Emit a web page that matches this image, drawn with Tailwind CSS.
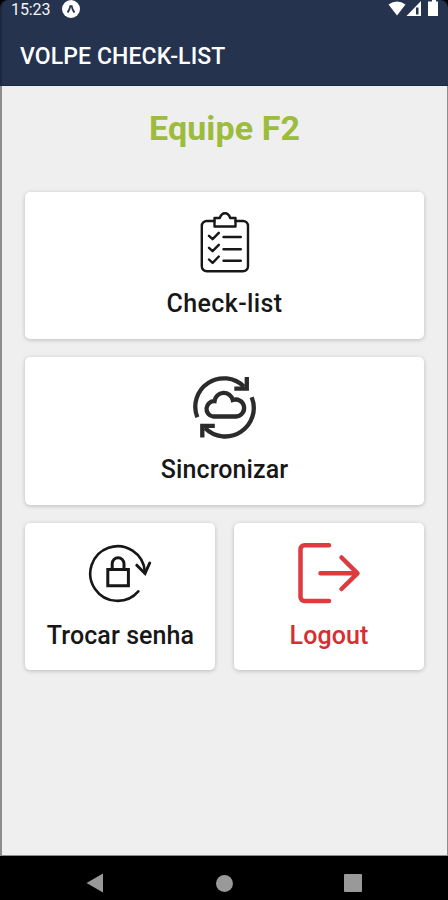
<!DOCTYPE html>
<html lang="pt-BR">
<head>
  <meta charset="UTF-8" />
  <meta name="viewport" content="width=device-width, initial-scale=1.0" />
  <title>Volpe Check-list</title>
  <script src="https://cdn.jsdelivr.net/npm/@tailwindcss/browser@4"></script>
</head>
<body class="bg-black font-['Roboto',sans-serif]">
  <div class="h-[900px] w-[448px] flex flex-col overflow-hidden">
    <!-- Header -->
    <header class="h-[86px] shrink-0 bg-[#25334f] border-l-2 border-[#1c2840] border-b border-b-[#1c2840] rounded-t-lg text-white">
      <div class="h-[18px] flex items-center justify-between pl-[9px] pr-[8px]">
        <div class="flex items-center gap-[12px]">
          <span class="pt-px text-[16px] leading-[19px] tracking-[-0.1px] text-gray-100">15:23</span>
          <svg class="w-[18px] h-[18px]" viewBox="0 0 18 18" fill="none">
            <circle cx="9" cy="9" r="9" fill="#fff" />
            <path d="M5.5 12.5C7 11 8 8 8.3 6.2h1.4C10 8 11 11 12.5 12.5" stroke="#25334f" stroke-width="1.8" />
          </svg>
        </div>
        <svg class="w-[52px] h-[18px]" viewBox="0 0 52 18" fill="#fff">
          <path d="M0.500 4.500Q9 -1.500 17.500 4.500L9 15.500z" />
          <path d="M33 1v15H18.500z" />
          <path d="M28 7.500h2.500v7H28z" fill="#25334f" />
          <path d="M42 1.500h2V0h4v1.500h2V16h-10V1.500z" />
        </svg>
      </div>
      <h1 class="mt-[25px] pl-[18px] text-[23px] leading-[28px] tracking-[0.1px] font-medium whitespace-nowrap">VOLPE CHECK-LIST</h1>
    </header>

    <!-- Content -->
    <main class="h-[770px] shrink-0 bg-[#efefef] border-l-2 border-r border-[#8c8c8c] border-b pt-[22px] pl-[23px] pr-[23px]">
      <h2 class="h-[83.500px] text-center text-[34px] leading-[40px] tracking-[0.1px] font-bold text-[#9dbb3c]">Equipe F2</h2>

      <div class="grid grid-cols-2 gap-x-[19px] gap-y-[18px] text-[#171717] text-[25px] leading-[30px] tracking-[0.1px] font-medium">
        <a href="#" class="col-span-2 h-[147.500px] flex flex-col items-center pt-[19.500px] bg-white rounded-[5px] shadow-[0_1px_4px_rgba(0,0,0,0.22)]">
          <svg class="w-16 h-16" viewBox="0.5 0 64 64" fill="none" stroke="currentColor" stroke-width="2.4" stroke-linecap="round" stroke-linejoin="round">
            <path d="M22 10H14.300a5 5 0 0 0-5 5v40.300a5 5 0 0 0 5 5h36.200a5 5 0 0 0 5-5V15a5 5 0 0 0-5-5H43" />
            <path d="M22 15.500V7h5.300c1-3 2.700-4.700 5.200-4.700S36.700 4 37.700 7H43v8.500z" />
            <path d="M16.500 24.800l3.600 3.400 6.200-6.400M16.500 36.800l3.600 3.400 6.200-6.400M16.500 48.500l3.600 3.400 6.200-6.400" />
            <path d="M31 26h17.300M31 38.300h17.300M31 49.700h17.300" />
          </svg>
          <span class="mt-[14px] tracking-[0.4px]">Check-list</span>
        </a>

        <a href="#" class="col-span-2 h-[147.500px] flex flex-col items-center pt-[19px] bg-white rounded-[5px] shadow-[0_1px_4px_rgba(0,0,0,0.22)]">
          <svg class="w-16 h-16" viewBox="0.5 0 64 64" fill="none" stroke="#2b2b2b" stroke-width="4.300">
            <path d="M4.800 41.300A28.500 28.500 0 0 1 51.500 10.700" />
            <path d="M54.300 1v11.700H41.800" />
            <path d="M59.200 21.300A28.500 28.500 0 0 1 12.500 52" />
            <path d="M9.800 61.500V49.900h12.500" />
            <path d="M20.500 40.500A7.700 7.700 0 0 1 22 25.200A9.300 9.300 0 0 1 40.300 24A8.500 8.500 0 1 1 43.500 40.500z" />
          </svg>
          <span class="mt-[15px]">Sincronizar</span>
        </a>

        <a href="#" class="h-[147.500px] flex flex-col items-center pt-[18px] bg-white rounded-[5px] shadow-[0_1px_4px_rgba(0,0,0,0.22)]">
          <svg class="w-16 h-16" viewBox="0 0 64 64" fill="none" stroke="currentColor" stroke-width="2.600" stroke-linecap="round">
            <path d="M50.300 50.300A27.300 27.300 0 1 1 56.800 30.500" />
            <path d="M48.800 24.200L57 32.500L61.700 22" stroke-width="3" />
            <path d="M19.800 28.500h20.600v16.200H19.800z" stroke-width="3" />
            <path d="M24.200 28v-5.300a5.900 5.900 0 0 1 11.800 0V28" stroke-width="3" />
          </svg>
          <span class="mt-[16px] pl-px">Trocar senha</span>
        </a>

        <a href="#" class="h-[147.500px] flex flex-col items-center pt-[18px] bg-white rounded-[5px] shadow-[0_1px_4px_rgba(0,0,0,0.22)] text-[#d92d30]">
          <svg class="w-16 h-16" viewBox="0 0 64 64" fill="none" stroke="#de3b40" stroke-width="4.500" stroke-linecap="round" stroke-linejoin="round">
            <path d="M32 4.200H7.500a4 4 0 0 0-4 4v47.800a4 4 0 0 0 4 4H32" />
            <path d="M23.500 32.300H60M44.500 16.500L60.500 32.300L44.500 48" />
          </svg>
          <span class="mt-[16px]">Logout</span>
        </a>
      </div>
    </main>

    <!-- Android navigation bar -->
    <nav class="h-[44px] shrink-0 flex items-center pt-[10px] bg-black">
      <svg class="w-[18px] h-[20px] ml-[86px]" viewBox="0 0 18 20" fill="#999"><path d="M0.500 10L17 0.500v19z" /></svg>
      <span class="ml-[112px] w-[17px] h-[17px] rounded-full bg-[#999]"></span>
      <span class="ml-[111px] w-[18px] h-[18px] rounded-[1px] bg-[#999]"></span>
    </nav>
  </div>
</body>
</html>
